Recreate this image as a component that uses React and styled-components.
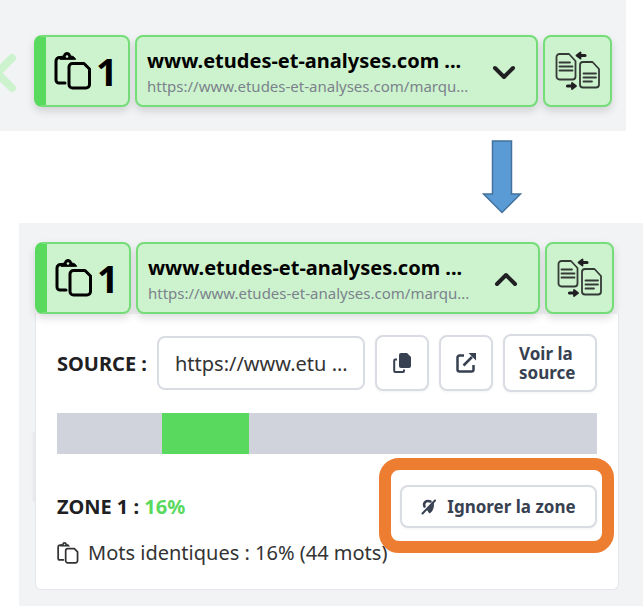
import React, {useState} from 'react';
import styled, {createGlobalStyle} from 'styled-components';

const GlobalStyle = createGlobalStyle`
    * {
        box-sizing:border-box;
    }

    body {
        margin:0;
        background-color:#ffffff;
        color:#202022;
        font-family:"Noto Sans","Open Sans",sans-serif;
    }

    button,input {
        font-family:inherit;
    }
`;

const source={
    title:'www.etudes-et-analyses.com ...',
    link:'https://www.etudes-et-analyses.com/marqu...',
    shortLink:'https://www.etu ...',
    rate:16,
    words:44,
    zoneStart:19.5,
};

const PagesIcon=({size,stroke})=>(
    <svg width={size} height={size} viewBox="0 0 38 38" fill="none" stroke="currentColor" strokeWidth={stroke} strokeLinecap="round" strokeLinejoin="round">
        <path d="M11 31H5a3 3 0 0 1-3-3V9a3.500 3.500 0 0 1 3.500-3.500H7" />
        <path d="M6 7c0-2 1-3 3.500-3a3.500 3.500 0 0 1 7 0c2.500 0 4 1 5 3z" fill="currentColor" strokeWidth="1" />
        <circle cx="13" cy="4.500" r="1.300" fill="#cdf3ce" stroke="none" />
        <path d="M18.500 11.500h11.500l5.500 5.500v15.500a3.500 3.500 0 0 1-3.500 3.500h-13.500a3.500 3.500 0 0 1-3.500-3.500V15a3.500 3.500 0 0 1 3.500-3.500z" />
    </svg>
);

const CompareIcon=()=>(
    <svg width="46" height="40" viewBox="0 0 46 40" fill="none" stroke="#343a36" strokeWidth="1.800" strokeLinejoin="round" strokeLinecap="round">
        <path d="M4.500 3h9.500l6.500 7v15.500a3 3 0 0 1-3 3h-13a3 3 0 0 1-3-3v-19.500a3 3 0 0 1 3-3z" />
        <path d="M4.500 11.500h10.500M4.500 15.500h13M4.500 19.500h13" />
        <path d="M28 11h9.500l6.500 7v15.500a3 3 0 0 1-3 3H28a3 3 0 0 1-3-3V14a3 3 0 0 1 3-3z" />
        <path d="M28.500 22.500h12.500M28.500 26.500h12.500M28.500 30.500h8.500" />
        <path d="M30 4.500H25M12.500 35H17" stroke="#202022" strokeWidth="3.200" />
        <path d="M25.500 1.500v6l-4-3zM17 32v6l4-3z" fill="#202022" stroke="#202022" />
    </svg>
);

const ChevronIcon=({open})=>(
    <svg width="24" height="16" viewBox="0 0 24 16" fill="none" stroke="#202022" strokeWidth="4" strokeLinecap="round" strokeLinejoin="round">
        <path d={open ? 'M3 12l9-9 9 9' : 'M3 3l9 9 9-9'} />
    </svg>
);

const CopyIcon=()=>(
    <svg width="20" height="22" viewBox="0 0 20 22">
        <path d="M9 1h6l4 4v9a2 2 0 0 1-2 2H9a2 2 0 0 1-2-2V3a2 2 0 0 1 2-2z" fill="#374151" />
        <path d="M5 7.500H3.200a1 1 0 0 0-1 1V19a1 1 0 0 0 1 1H11a1 1 0 0 0 1-1v-1.500" fill="none" stroke="#374151" strokeWidth="2" />
    </svg>
);

const ExternalIcon=()=>(
    <svg width="22" height="22" viewBox="0 0 22 22" fill="none" stroke="#374151" strokeWidth="2.500">
        <path d="M9 3.500H4.500a2 2 0 0 0-2 2v12a2 2 0 0 0 2 2h12a2 2 0 0 0 2-2V13M8.500 13.500L17 5" />
        <path d="M13.500 1H21v7.500z" fill="#374151" stroke="none" />
    </svg>
);

const IgnoreIcon=()=>(
    <svg width="16" height="18" viewBox="0 0 16 18" fill="none" stroke="#374151" strokeLinecap="round" strokeLinejoin="round">
        <path d="M3.500 8.500C2 4.500 5 2 9.500 3.500" strokeWidth="2.500" />
        <path d="M12.500 5.500C12.500 10 11.500 13.500 8.500 15L6.500 12z" fill="#374151" strokeWidth="1" />
        <path d="M1.500 15.500L14 2.500" strokeWidth="2" />
    </svg>
);

const SourceHeader=({open,onToggle})=>(
    <HeaderRow>
        <RankCard>
            <PagesIcon size={38} stroke={3} />
            <Rank>1</Rank>
        </RankCard>
        <SourceCard onClick={onToggle} aria-expanded={open}>
            <SourceTexts>
                <SourceTitle>{source.title}</SourceTitle>
                <SourceLink>{source.link}</SourceLink>
            </SourceTexts>
            <ChevronIcon open={open} />
        </SourceCard>
        <CompareCard aria-label="Comparer">
            <CompareIcon />
        </CompareCard>
    </HeaderRow>
);

const SourceDetails=()=>(
    <Details>
        <SourceRow>
            <Label htmlFor="source-url">SOURCE :</Label>
            <UrlInput id="source-url" readOnly value={source.shortLink} />
            <SquareButton aria-label="Copier"><CopyIcon /></SquareButton>
            <SquareButton aria-label="Ouvrir"><ExternalIcon /></SquareButton>
            <ViewButton>Voir la source</ViewButton>
        </SourceRow>
        <Track>
            <Zone style={{marginLeft:`${source.zoneStart}%`,width:`${source.rate}%`}} />
        </Track>
        <ZoneRow>
            <ZoneName>ZONE 1 : <Rate>{source.rate}%</Rate></ZoneName>
            <IgnoreWrapper>
                <IgnoreButton><IgnoreIcon />Ignorer la zone</IgnoreButton>
            </IgnoreWrapper>
        </ZoneRow>
        <Words>
            <PagesIcon size={22} stroke={3} />
            Mots identiques : {source.rate}% ({source.words} mots)
        </Words>
    </Details>
);

export default function App(){
    const [firstOpen,setFirstOpen]=useState(false);
    const [secondOpen,setSecondOpen]=useState(true);

    return(
        <Page>
            <GlobalStyle />
            <TopPanel>
                <PreviousIcon width="18" height="42" viewBox="0 0 18 42" fill="none" stroke="#cdf3ce" strokeWidth="8" strokeLinecap="round" strokeLinejoin="round">
                    <path d="M12 6L-3 21l15 15" />
                </PreviousIcon>
                <SourceHeader open={firstOpen} onToggle={()=>setFirstOpen(!firstOpen)} />
            </TopPanel>
            <ArrowRow>
                <svg width="40" height="74" viewBox="0 0 40 74" fill="#5b9bd5" stroke="#41719c" strokeWidth="1.500">
                    <path d="M10.500 1h19v53h9L20 72.500 1.500 54h9z" />
                </svg>
            </ArrowRow>
            <BottomPanel>
                <SourceHeader open={secondOpen} onToggle={()=>setSecondOpen(!secondOpen)} />
                {secondOpen && <SourceDetails />}
            </BottomPanel>
        </Page>
    );
}

const Page=styled.main`
    display:flex;
    flex-direction:column;
    min-height:100vh;
    overflow:hidden;
`;

const TopPanel=styled.section`
    position:relative;
    margin-right:17px;
    padding:35px 14px 24px 34px;
    background-color:#f2f3f5;
`;

const PreviousIcon=styled.svg`
    position:absolute;
    left:0;
    top:52px;
`;

const ArrowRow=styled.div`
    display:flex;
    justify-content:flex-end;
    padding:9px 121px 9px 0;
`;

const BottomPanel=styled.section`
    flex:1;
    margin-left:19px;
    padding:19px 24px 17px 16px;
    background-color:#f2f3f5;
`;

const HeaderRow=styled.div`
    position:relative;
    z-index:1;
    display:grid;
    grid-template-columns:96px minmax(0,1fr) 69px;
    gap:5px;
    height:72px;

    ${BottomPanel} & {
        margin-right:5px;
    }
`;

const Card=styled.div`
    display:flex;
    align-items:center;
    border:2px solid #74dd78;
    border-radius:8px;
    background-color:#cdf3ce;
    color:#000000;
    box-shadow:0 4px 8px rgba(0,0,0,0.14);
`;

const RankCard=styled(Card)`
    gap:4px;
    padding-left:8px;
    border-left:12px solid #59d95e;
`;

const Rank=styled.span`
    font-size:38px;
    line-height:40px;
    font-weight:bold;
`;

const SourceCard=styled(Card).attrs({as:'button',type:'button'})`
    justify-content:space-between;
    padding:4px 20px 0 10px;
    text-align:left;
    cursor:pointer;
`;

const SourceTexts=styled.span`
    display:flex;
    flex-direction:column;
    white-space:nowrap;
`;

const SourceTitle=styled.span`
    font-size:20px;
    line-height:26px;
    font-weight:bold;
`;

const SourceLink=styled.span`
    color:#7b828c;
    font-size:15px;
    line-height:24px;
`;

const CompareCard=styled(Card).attrs({as:'button',type:'button'})`
    justify-content:center;
    padding:0;
    cursor:pointer;
`;

const Details=styled.div`
    position:relative;
    display:flex;
    flex-direction:column;
    padding:20px 21px 21px 21px;
    border:1px solid #e5e7eb;
    border-top:0;
    border-radius:0 0 6px 6px;
    background-color:#ffffff;

    &::before {
        content:"";
        position:absolute;
        left:-5px;
        top:118px;
        width:4px;
        height:70px;
        background:linear-gradient(to right,rgba(0,0,0,0),rgba(0,0,0,0.05));
    }
`;

const SourceRow=styled.div`
    display:flex;
    align-items:center;
    gap:10px;
`;

const Label=styled.label`
    font-size:20px;
    font-weight:bold;
    white-space:nowrap;
`;

const UrlInput=styled.input`
    flex:1;
    min-width:0;
    height:54px;
    padding:0 14px 0 16px;
    border:2px solid #d9dce3;
    border-radius:8px;
    background-color:#ffffff;
    color:#333333;
    font-size:20px;
`;

const OutlineButton=styled.button.attrs({type:'button'})`
    display:flex;
    align-items:center;
    justify-content:center;
    flex-shrink:0;
    padding:0;
    border:2px solid #d9dce3;
    border-radius:8px;
    background-color:#ffffff;
    color:#374151;
    font-size:17px;
    line-height:19px;
    font-weight:bold;
    box-shadow:0 1px 3px rgba(0,0,0,0.05);
    cursor:pointer;
`;

const SquareButton=styled(OutlineButton)`
    width:54px;
    height:56px;
`;

const ViewButton=styled(OutlineButton)`
    width:94px;
    height:58px;
    padding:0 14px;
    text-align:left;
`;

const Track=styled.div`
    height:41px;
    margin-top:21px;
    background-color:#d0d3dc;
`;

const Zone=styled.div`
    height:100%;
    background-color:#59d95e;
`;

const ZoneRow=styled.div`
    display:flex;
    align-items:center;
    justify-content:space-between;
    margin-top:31px;
`;

const ZoneName=styled.span`
    font-size:20px;
    font-weight:bold;
`;

const Rate=styled.span`
    color:#59d95e;
`;

const IgnoreWrapper=styled.div`
    position:relative;
    z-index:1;

    &::after {
        content:"";
        position:absolute;
        inset:-27px -17px -25px -21px;
        border:12px solid #ed7d31;
        border-radius:20px;
        pointer-events:none;
    }
`;

const IgnoreButton=styled(OutlineButton)`
    gap:10px;
    width:197px;
    height:43px;
`;

const Words=styled.div`
    display:flex;
    align-items:center;
    gap:9px;
    margin-top:10px;
    color:#333333;
    font-size:20px;
    line-height:30px;
`;
